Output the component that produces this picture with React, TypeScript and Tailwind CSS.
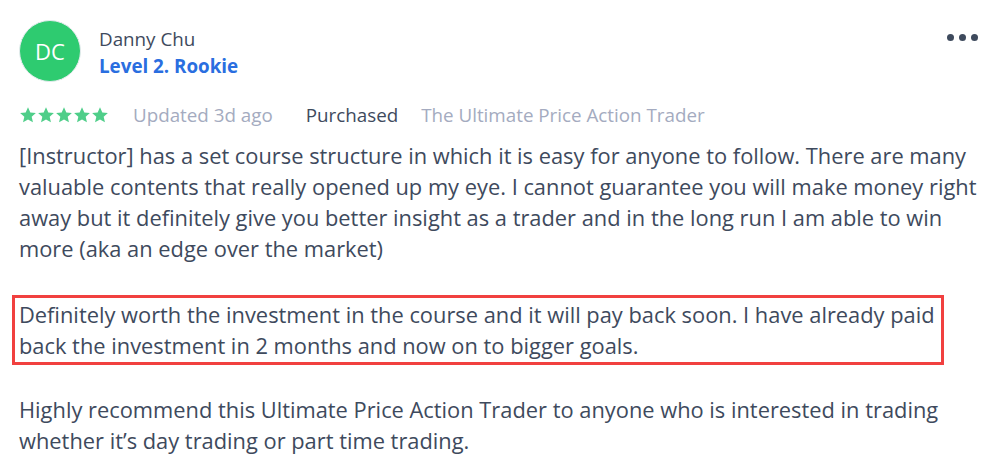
function Star() {
  return (
    <svg viewBox="0 0 24 24" className="size-[18px] fill-[#4fce89]">
      <path d="M12 1.8l3.1 6.9 7.4.7-5.6 5 1.7 7.4L12 17.9l-6.6 3.9 1.7-7.4-5.6-5 7.4-.7z" />
    </svg>
  );
}

export default function App() {
  return (
    <div className="w-[1000px] h-[473px] bg-white font-['Open_Sans',sans-serif] text-[#3e4a5d] pl-[19px] pr-[12px] pt-[20px] overflow-hidden">
      <div className="flex items-start">
        <div className="size-[62px] rounded-full bg-[#2ecb70] border border-[#e6ebef] flex items-center justify-center text-white text-[22px]">
          DC
        </div>
        <div className="ml-[18px] pt-[6px] flex-1">
          <div className="text-[18.8px] leading-[27px]">Danny Chu</div>
          <div className="text-[18.8px] leading-[27px] font-bold text-[#2a6ee0]">Level 2. Rookie</div>
        </div>
        <div className="flex gap-[5px] mt-[14px] mr-[10px]">
          <span className="size-[7px] rounded-full bg-[#3e4a5d]" />
          <span className="size-[7px] rounded-full bg-[#3e4a5d]" />
          <span className="size-[7px] rounded-full bg-[#3e4a5d]" />
        </div>
      </div>

      <div className="flex items-center mt-[19px] text-[18.8px] leading-[28px]">
        <div className="flex">
          <Star />
          <Star />
          <Star />
          <Star />
          <Star />
        </div>
        <span className="ml-[24px] text-[#a4abc0]">Updated 3d ago</span>
        <span className="ml-[33px]">Purchased</span>
        <span className="ml-[23px] text-[#a4abc0]">The Ultimate Price Action Trader</span>
      </div>

      <div className="mt-[11px] text-[21.85px] leading-[31px]">
        <p>
          [Instructor] has a set course structure in which it is easy for anyone to follow. There are many valuable
          contents that really opened up my eye. I cannot guarantee you will make money right away but it definitely
          give you better insight as a trader and in the long run I am able to win more (aka an edge over the market)
        </p>
        <p className="mt-[31px] -ml-[7px] w-[932px] border-[3px] border-[#f1403f] pl-[4px] pr-[2px] py-[1px]">
          Definitely worth the investment in the course and it will pay back soon. I have already paid back the
          investment in 2 months and now on to bigger goals.
        </p>
        <p className="mt-[29px]">
          Highly recommend this Ultimate Price Action Trader to anyone who is interested in trading whether it’s day
          trading or part time trading.
        </p>
      </div>
    </div>
  );
}
